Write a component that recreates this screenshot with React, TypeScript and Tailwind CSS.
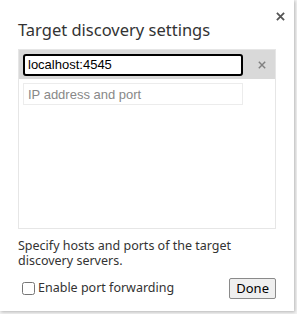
import { useState } from 'react'

// Target discovery settings dialog. Single card, hosts list, footer.

const UI_FONT = "font-['Noto_Sans','DejaVu_Sans',sans-serif]"
const FIELD_FONT = "font-['Liberation_Sans',Arial,sans-serif]"

function Cross({ size, stroke, color }: { size: number; stroke: number; color: string }) {
  return (
    <svg width={size} height={size} viewBox="0 0 10 10" aria-hidden>
      <path d="M1 1L9 9M9 1L1 9" stroke={color} strokeWidth={stroke} strokeLinecap="butt" />
    </svg>
  )
}

export default function App() {
  const [hosts, setHosts] = useState<string[]>(['localhost:4545'])
  const [draft, setDraft] = useState('')
  const [forwarding, setForwarding] = useState(false)

  return (
    <div className="h-[314px] w-[297px] overflow-hidden bg-[#f2f2f2]">
      <div
        className={`relative flex h-[311px] w-[294px] flex-col bg-white px-[18px] text-[#333] shadow-[1px_1px_3px_rgba(0,0,0,0.25)] ${UI_FONT}`}
      >
        <button
          type="button"
          className="absolute right-[9px] top-[12px] leading-none"
          aria-label="Close"
        >
          <Cross size={9} stroke={2} color="#555" />
        </button>

        <h1 className="pt-[17px] text-[16.5px] leading-[26px] text-[#333]">
          Target discovery settings
        </h1>

        <div className="mt-[6px] h-[180px] border border-[#e6e6e6]">
          {hosts.map((h, i) => (
            <div
              key={i}
              className="flex h-[29px] items-center bg-[#d9d9d9] pl-[4px]"
            >
              <input
                value={h}
                onChange={(e) =>
                  setHosts(hosts.map((x, j) => (j === i ? e.target.value : x)))
                }
                className={`h-[22px] w-[220px] rounded-[3px] border-2 border-black bg-white px-[3px] text-[13px] text-black outline-none ${FIELD_FONT}`}
              />
              <button
                type="button"
                onClick={() => setHosts(hosts.filter((_, j) => j !== i))}
                className="ml-[15px] leading-none"
              >
                <Cross size={8} stroke={1.8} color="#808080" />
              </button>
            </div>
          ))}
          <div className="flex pl-[4px] pt-[4px]">
            <input
              value={draft}
              onChange={(e) => setDraft(e.target.value)}
              placeholder="IP address and port"
              className={`h-[22px] w-[220px] border border-[#ececec] bg-white px-[4px] text-[13px] text-black outline-none placeholder:text-[#888] ${FIELD_FONT}`}
            />
          </div>
        </div>

        <p className="mt-[9px] text-[12.5px] leading-[15px] text-[#333]">
          Specify hosts and ports of the target discovery servers.
        </p>

        <div className="mt-[10px] flex items-center justify-between">
          <label className="flex items-center gap-[3px] pl-[4px] text-[12.5px] text-[#333]">
            <input
              type="checkbox"
              checked={forwarding}
              onChange={(e) => setForwarding(e.target.checked)}
              className="m-0 h-[13px] w-[13px]"
            />
            Enable port forwarding
          </label>
          <button
            type="button"
            className="h-[21px] rounded-[2px] border border-[#8a8a8a] bg-[#efefef] px-[6px] text-[13px] leading-none text-black"
          >
            Done
          </button>
        </div>
      </div>
    </div>
  )
}
